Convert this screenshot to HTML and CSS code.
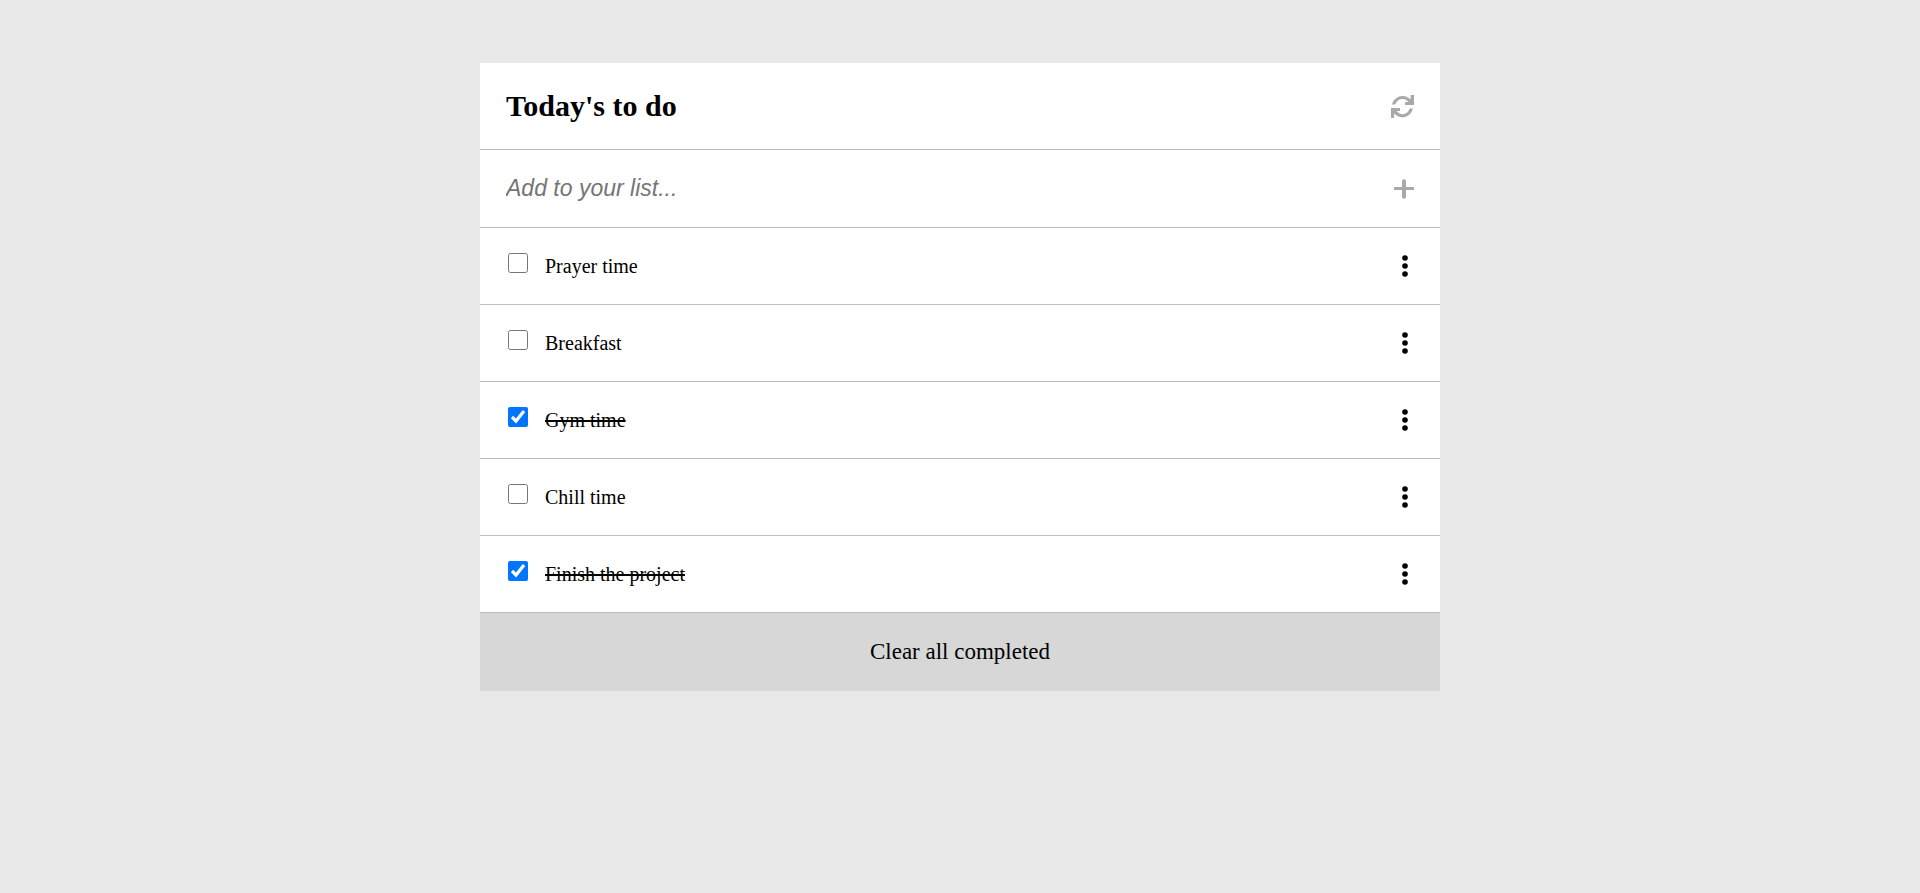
FILE: index.html
```html
<!DOCTYPE html>
<html lang="en">
<head>
<meta charset="utf-8">
<meta name="viewport" content="width=device-width, initial-scale=1">
<title>Today's to do</title>
<link rel="stylesheet" href="styles.css">
</head>
<body>
<svg class="sprite" aria-hidden="true">
  <symbol id="dots" viewBox="0 0 6 22"><circle cx="3" cy="3" r="2.8"/><circle cx="3" cy="11" r="2.8"/><circle cx="3" cy="19" r="2.8"/></symbol>
</svg>
<main class="card">
  <header class="row header">
    <h1 class="title">Today's to do</h1>
    <button class="icon-button" type="button" aria-label="Refresh">
      <svg class="icon refresh" viewBox="0 0 23 23"><path d="M1 9.500C2.500 4 7 1 11.500 1C15 1 17.500 2.300 19.600 4.400V0H23V10H14V7H17.300C15.800 5 13.800 4 11.500 4C8 4 5.500 6 4.200 9.500ZM22 13.500C20.500 19 16 22.300 11.500 22.300C8 22.300 5.400 20.800 3.200 18.600V23H0V13H9V16H5.700C7.200 18 9.200 19.200 11.500 19.200C15 19.200 17.500 17 18.800 13.500Z"/></svg>
    </button>
  </header>
  <form class="row add">
    <input class="entry" type="text" placeholder="Add to your list..." aria-label="Add to your list">
    <button class="icon-button" type="button" aria-label="Add">
      <svg class="icon plus" viewBox="0 0 20 20"><path d="M8 1.500Q10-1 12 1.500V8H20V11H12V18.500Q10 21 8 18.500V11H0V8H8Z"/></svg>
    </button>
  </form>
  <ul class="list">
    <li class="row item"><input class="check" type="checkbox" id="t1"><label class="label" for="t1">Prayer time</label><button class="icon-button menu" type="button" aria-label="Options"><svg class="icon dots"><use href="#dots"/></svg></button></li>
    <li class="row item"><input class="check" type="checkbox" id="t2"><label class="label" for="t2">Breakfast</label><button class="icon-button menu" type="button" aria-label="Options"><svg class="icon dots"><use href="#dots"/></svg></button></li>
    <li class="row item"><input class="check" type="checkbox" id="t3" checked><label class="label" for="t3">Gym time</label><button class="icon-button menu" type="button" aria-label="Options"><svg class="icon dots"><use href="#dots"/></svg></button></li>
    <li class="row item"><input class="check" type="checkbox" id="t4"><label class="label" for="t4">Chill time</label><button class="icon-button menu" type="button" aria-label="Options"><svg class="icon dots"><use href="#dots"/></svg></button></li>
    <li class="row item"><input class="check" type="checkbox" id="t5" checked><label class="label" for="t5">Finish the project</label><button class="icon-button menu" type="button" aria-label="Options"><svg class="icon dots"><use href="#dots"/></svg></button></li>
  </ul>
  <button class="clear" type="button">Clear all completed</button>
</main>
</body>
</html>
```
FILE: styles.css
```css
* { box-sizing: border-box; }
body {
  margin: 0;
  padding: 63px 0;
  background: #e8e8e8;
  color: #000;
  font-family: "Liberation Serif", "Times New Roman", serif;
}
.sprite { display: none; }
.card {
  width: 50%;
  margin: 0 auto;
  background: #fff;
}
.row {
  display: flex;
  align-items: center;
  padding: 0 26px;
  border-bottom: 1px solid #bebebe;
}
.header { min-height: 87px; justify-content: space-between; }
.title { margin: 0; font-size: 30px; line-height: 34px; }
.add { min-height: 78px; }
.entry {
  flex: 1;
  min-width: 0;
  padding: 0 0 2px;
  border: 0;
  outline: 0;
  background: transparent;
  font: italic 23px/28px "Liberation Sans", Arial, sans-serif;
}
.entry::placeholder { color: #757575; }
.icon-button {
  display: flex;
  padding: 0;
  border: 0;
  background: none;
  color: #a9a9a9;
  cursor: pointer;
}
.icon { display: block; fill: currentColor; }
.refresh { width: 23px; height: 23px; }
.plus { width: 20px; height: 20px; }
.dots { width: 6px; height: 22px; }
.list { margin: 0; padding: 0; list-style: none; }
.item { min-height: 77px; padding-right: 32px; }
.check { width: 20px; height: 20px; margin: 0 17px 6px 2px; }
.label { flex: 1; font-size: 20px; line-height: 24px; }
.check:checked + .label { text-decoration: line-through; text-decoration-thickness: 2px; }
.menu { color: #000; }
.clear {
  display: block;
  width: 100%;
  min-height: 78px;
  padding: 0;
  border: 0;
  background: #d7d7d7;
  color: #000;
  font: 23px/28px "Liberation Serif", "Times New Roman", serif;
  cursor: pointer;
}
```
